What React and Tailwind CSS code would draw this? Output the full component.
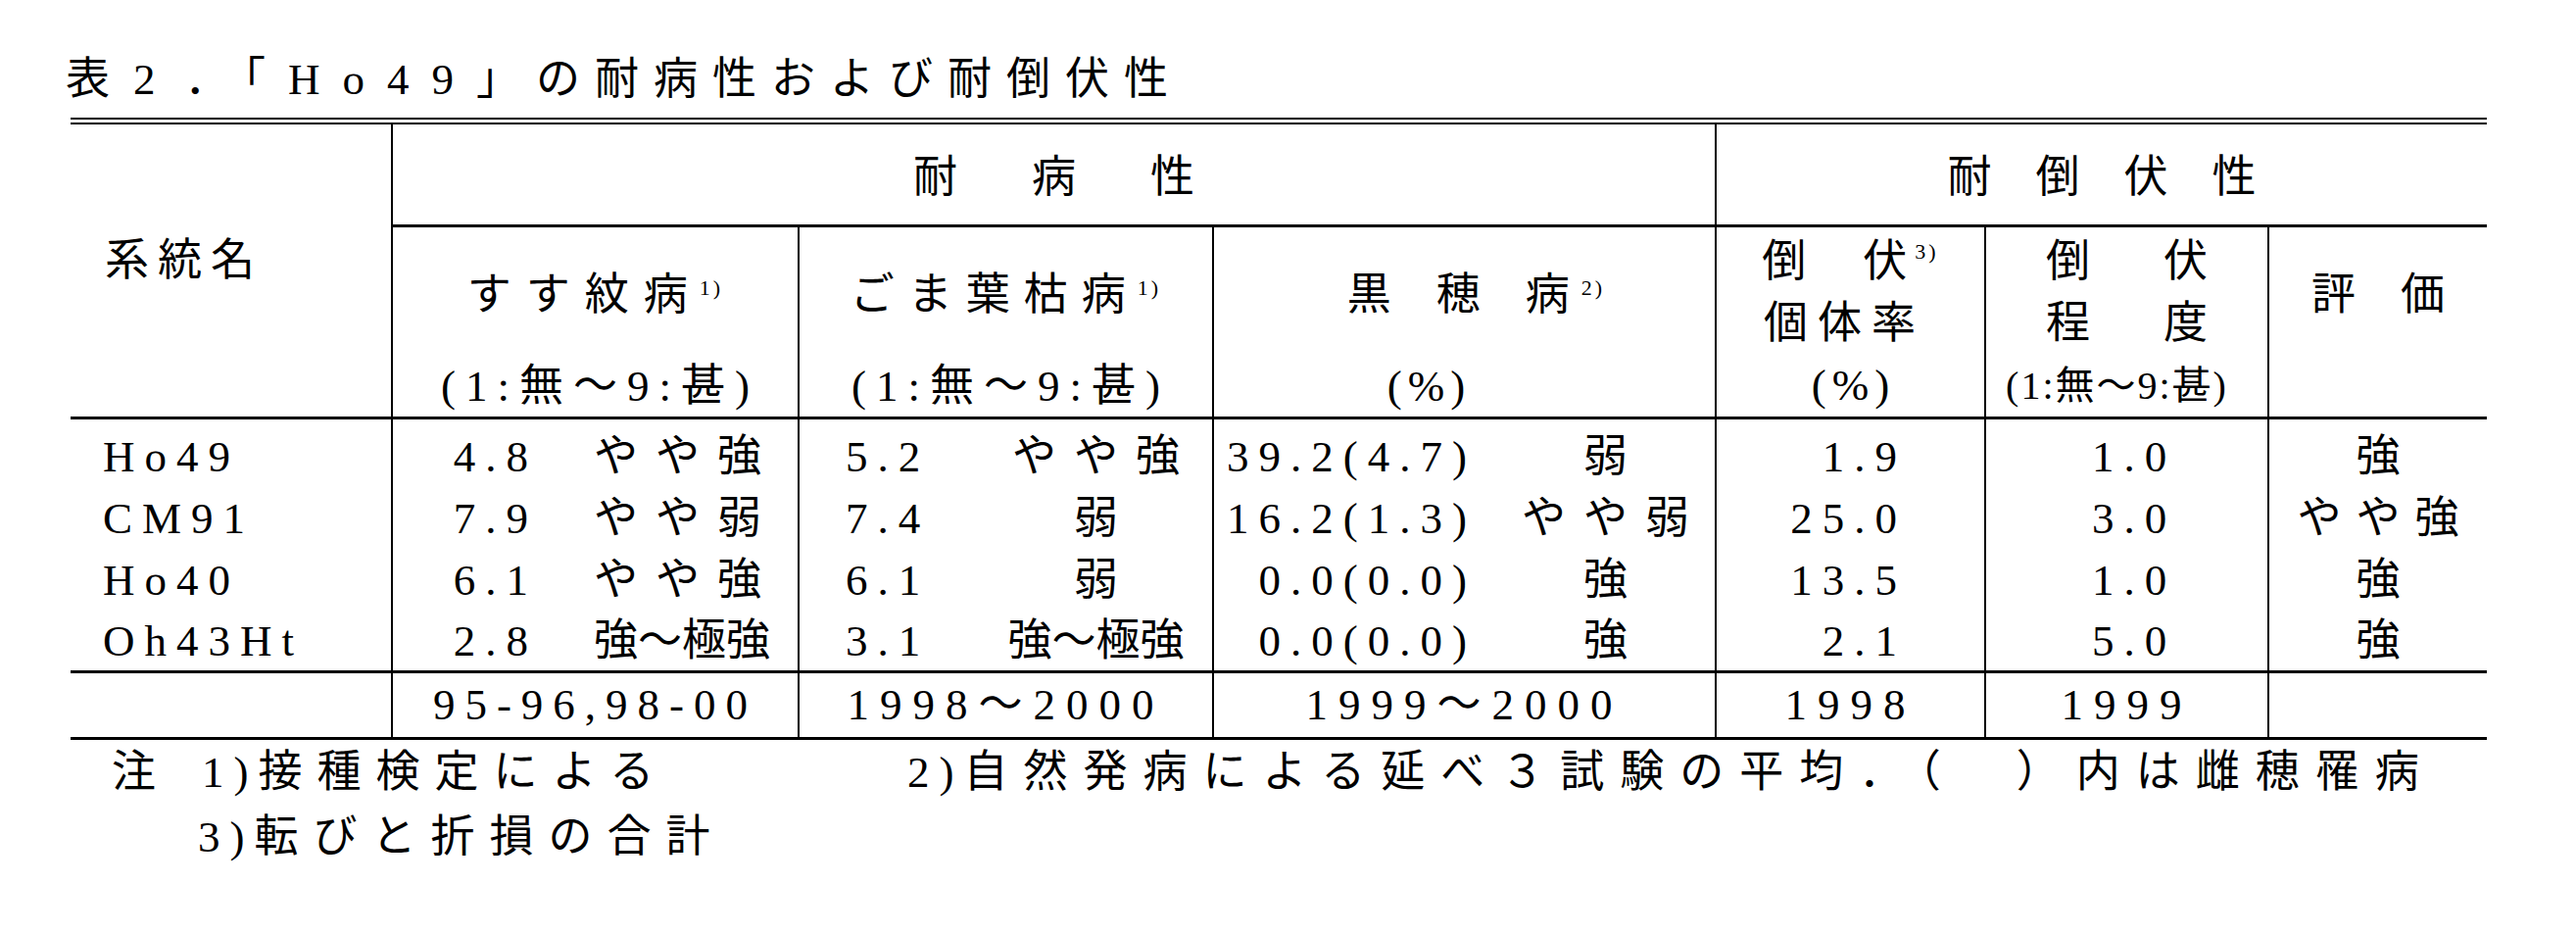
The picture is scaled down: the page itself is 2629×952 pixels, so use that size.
import { Fragment } from "react";

const rows = [
  { name: "Ho49", a: "4.8", ar: "やや強", b: "5.2", br: "やや強", c: "39.2(4.7)", cr: "弱", d: "1.9", e: "1.0", f: "強" },
  { name: "CM91", a: "7.9", ar: "やや弱", b: "7.4", br: "弱", c: "16.2(1.3)", cr: "やや弱", d: "25.0", e: "3.0", f: "やや強" },
  { name: "Ho40", a: "6.1", ar: "やや強", b: "6.1", br: "弱", c: "0.0(0.0)", cr: "強", d: "13.5", e: "1.0", f: "強" },
  { name: "Oh43Ht", a: "2.8", ar: "強～極強", b: "3.1", br: "強～極強", c: "0.0(0.0)", cr: "強", d: "2.1", e: "5.0", f: "強" },
];

// 評価の文字列。「強～極強」だけ字間を詰める
const Rating = ({ text, tight }) => {
  if (text.length > 3) return <span className="inline-block">{text}</span>;
  if (tight) return <span className="inline-block tracking-[15px] -mr-[15px]">{text}</span>;
  return <span className="inline-block tracking-[18px] -mr-[18px]">{text}</span>;
};

const Sup = ({ children }) => (
  <span className="ml-[12px] mt-[14px] text-[22px] leading-none tracking-[3px]">{children}</span>
);

const App = () => {
  return (
    <div className="min-h-[952px] w-[2629px] bg-white pt-[49px] text-[45px] leading-none text-black font-['Liberation_Serif','Noto_Sans_CJK_JP',serif]">
      <h1 className="h-[64px] whitespace-nowrap pl-[67px] leading-[64px]">
        <span className="tracking-[24px]">表</span>
        <span className="tracking-[30px]">2</span>
        <span className="tracking-[15px]">．</span>
        <span className="tracking-[23px]">「Ho49</span>
        <span className="tracking-[16px]">」</span>
        <span className="tracking-[15px]">の耐病性および耐倒伏性</span>
      </h1>

      <div className="ml-[72px] mt-[7px] w-[2466px] border-t-[7px] border-double border-black">
        <div className="grid grid-cols-[327px_415px_423px_513px_275px_289px_224px] grid-rows-[105px_196px_70px_63px_63px_63px_68px]">
          {/* header row 1 */}
          <div className="row-span-2 border-b-[3px] border-black pl-[35px] pt-[107px] leading-[64px] tracking-[9px]">
            系統名
          </div>
          <div className="col-span-3 flex items-center justify-center border-b-[3px] border-l-2 border-black pt-[6px] leading-[64px]">
            <span className="tracking-[76px]">耐病</span>
            <span>性</span>
          </div>
          <div className="col-span-3 flex items-center justify-center border-b-[3px] border-l-2 border-black pt-[6px] leading-[64px]">
            <span className="tracking-[45px]">耐倒伏</span>
            <span>性</span>
          </div>

          {/* header row 2 */}
          <div className="flex flex-col items-center border-b-[3px] border-l-2 border-black">
            <div className="mt-[37px] flex h-[64px] items-start leading-[64px]">
              <span className="tracking-[15px]">すす紋</span>
              <span>病</span>
              <Sup>1)</Sup>
            </div>
            <div className="-mr-[10px] mt-[33px] leading-[56px] tracking-[10px]">(1:無～9:甚)</div>
          </div>
          <div className="flex flex-col items-center border-b-[3px] border-l-2 border-black">
            <div className="mt-[37px] flex h-[64px] items-start leading-[64px]">
              <span className="tracking-[14px]">ごま葉枯</span>
              <span>病</span>
              <Sup>1)</Sup>
            </div>
            <div className="-mr-[10px] mt-[33px] leading-[56px] tracking-[10px]">(1:無～9:甚)</div>
          </div>
          <div className="flex flex-col items-center border-b-[3px] border-l-2 border-black">
            <div className="ml-[24px] mt-[37px] flex h-[64px] items-start leading-[64px]">
              <span className="tracking-[46px]">黒穂</span>
              <span>病</span>
              <Sup>2)</Sup>
            </div>
            <div className="mr-[72px] mt-[33px] leading-[56px] tracking-[6px]">(%)</div>
          </div>
          <div className="flex flex-col items-center border-b-[3px] border-l-2 border-black pt-[4px] leading-[63px]">
            <div className="flex h-[63px] items-start">
              <span className="tracking-[58px]">倒</span>
              <span>伏</span>
              <span className="ml-[8px] mt-[10px] text-[22px] leading-none tracking-[3px]">3)</span>
            </div>
            <div className="mr-[12px] tracking-[10px]">個体率</div>
            <div className="-mr-[6px] tracking-[6px]">(%)</div>
          </div>
          <div className="flex flex-col items-center border-b-[3px] border-l-2 border-black pt-[4px] leading-[63px]">
            <div>
              <span className="tracking-[75px]">倒</span>
              <span>伏</span>
            </div>
            <div>
              <span className="tracking-[75px]">程</span>
              <span>度</span>
            </div>
            <div className="mr-[20px] text-[40px] tracking-[2px]">(1:無～9:甚)</div>
          </div>
          <div className="flex flex-col items-center border-b-[3px] border-l-2 border-black">
            <div className="mt-[37px] leading-[64px]">
              <span className="tracking-[46px]">評</span>
              <span>価</span>
            </div>
          </div>

          {/* data rows */}
          {rows.map((r, i) => {
            const edge = i === 0 ? "pt-[7px]" : i === rows.length - 1 ? "border-b-[3px]" : "";
            return (
              <Fragment key={r.name}>
                <div className={`${edge} flex items-center border-black pl-[33px] tracking-[10px]`}>{r.name}</div>
                <div className={`${edge} flex items-center border-l-2 border-black`}>
                  <span className="w-[148px] text-right tracking-[10px]">{r.a}</span>
                  <span className="pl-[57px]">
                    <Rating text={r.ar} />
                  </span>
                </div>
                <div className={`${edge} flex items-center border-l-2 border-black`}>
                  <span className="w-[184px] pl-[47px] tracking-[10px]">{r.b}</span>
                  <span className="flex-1 text-center">
                    <Rating text={r.br} />
                  </span>
                </div>
                <div className={`${edge} flex items-center border-l-2 border-black`}>
                  <span className="w-[268px] text-right tracking-[10px]">{r.c}</span>
                  <span className="flex-1 pl-[20px] text-center">
                    <Rating text={r.cr} />
                  </span>
                </div>
                <div className={`${edge} flex items-center border-l-2 border-black`}>
                  <span className="w-[194px] text-right tracking-[10px]">{r.d}</span>
                </div>
                <div className={`${edge} flex items-center justify-center border-l-2 border-black pl-[15px]`}>
                  <span className="tracking-[10px]">{r.e}</span>
                </div>
                <div className={`${edge} flex items-center justify-center border-l-2 border-black`}>
                  <Rating text={r.f} tight />
                </div>
              </Fragment>
            );
          })}

          {/* 試験年次 */}
          <div className="border-b-[3px] border-black" />
          <div className="flex items-center justify-center border-b-[3px] border-l-2 border-black">
            <span className="tracking-[10px]">95-96,98-00</span>
          </div>
          <div className="flex items-center justify-center border-b-[3px] border-l-2 border-black">
            <span className="tracking-[11px]">1998～2000</span>
          </div>
          <div className="flex items-center justify-center border-b-[3px] border-l-2 border-black">
            <span className="tracking-[11px]">1999～2000</span>
          </div>
          <div className="flex items-center justify-center border-b-[3px] border-l-2 border-black">
            <span className="tracking-[11px]">1998</span>
          </div>
          <div className="flex items-center justify-center border-b-[3px] border-l-2 border-black">
            <span className="tracking-[11px]">1999</span>
          </div>
          <div className="border-b-[3px] border-l-2 border-black" />
        </div>
      </div>

      <div className="whitespace-nowrap pl-[114px] leading-[66px]">
        <div className="flex">
          <span className="w-[92px]">注</span>
          <span className="w-[720px]">
            <span className="tracking-[10px]">1)</span>
            <span className="tracking-[15px]">接種検定による</span>
          </span>
          <span>
            <span className="tracking-[10px]">2)</span>
            <span className="tracking-[16px]">自然発病による延べ３試験の平均．（　）内は雌穂罹病</span>
          </span>
        </div>
        <div className="pl-[88px]">
          <span className="tracking-[10px]">3)</span>
          <span className="tracking-[15px]">転びと折損の合計</span>
        </div>
      </div>
    </div>
  );
};

export default App;
